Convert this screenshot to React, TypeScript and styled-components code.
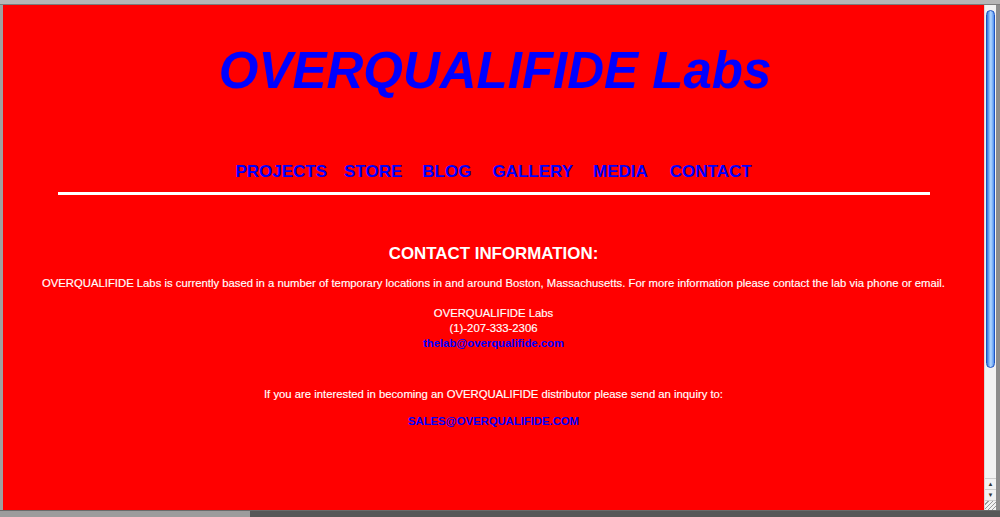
import React from 'react';
import styled, { createGlobalStyle } from 'styled-components';

const GlobalStyle = createGlobalStyle`
  html, body {
    margin: 0;
    padding: 0;
    overflow: hidden;
    background: #a4a4a4;
  }
`;

const Screen = styled.div`
  display: flex;
  flex-direction: column;
  width: 1000px;
  height: 517px;
  font-family: 'Liberation Sans', Arial, Helvetica, sans-serif;
`;

const TopStrip = styled.div`
  height: 4px;
  background: #b6b6b6;
  border-bottom: 1px solid #7c7c7c;
`;

const Middle = styled.div`
  display: flex;
  flex: 1;
  min-height: 0;
`;

const Edge = styled.div<{ $w: number; $bg: string }>`
  width: ${(p) => p.$w}px;
  background: ${(p) => p.$bg};
`;

const Page = styled.main`
  flex: 1;
  background: #ff0000;
  text-align: center;
  color: #ffffff;
  overflow: hidden;
`;

const Title = styled.h1`
  margin: 40px 0 0;
  padding-left: 3px;
  font-size: 51px;
  line-height: 51px;
  font-weight: bold;
  font-style: italic;
  color: #0000ff;
`;

const Nav = styled.nav`
  display: flex;
  justify-content: center;
  margin-top: 67px;
`;

const NavLink = styled.a<{ $gap: number }>`
  margin-left: ${(p) => p.$gap}px;
  font-size: 17px;
  line-height: 17px;
  font-weight: bold;
  color: #0000ff;
  text-decoration: none;
`;

const Rule = styled.div`
  width: 872px;
  height: 3px;
  margin: 12px auto 0;
  background: #ffffff;
`;

const Heading = styled.h2`
  margin: 50px 0 0;
  font-size: 16.9px;
  line-height: 17px;
  font-weight: bold;
`;

const Text = styled.p<{ $top: number }>`
  margin: ${(p) => p.$top}px 0 0;
  font-size: 11.3px;
  line-height: 15px;
  -webkit-text-stroke: 0.15px #ffffff;
`;

const MailLink = styled.a`
  font-weight: bold;
  color: #0000ff;
  text-decoration: none;
  -webkit-text-stroke: 0;
`;

const Scrollbar = styled.div`
  display: flex;
  flex-direction: column;
  width: 12px;
  background: #f2f2f2;
  border-left: 1px solid #d8d8d8;
  box-sizing: border-box;
`;

const Thumb = styled.div`
  height: 358px;
  margin: 5px 1px 0 1px;
  border-radius: 5px;
  border: 1px solid #1f54c0;
  background: linear-gradient(90deg, #2f6fdc 0%, #86bdf8 35%, #b4d8ff 55%, #4d8ff0 100%);
  box-sizing: border-box;
`;

const Track = styled.div`
  flex: 1;
`;

const ArrowButton = styled.div`
  display: flex;
  align-items: center;
  justify-content: center;
  height: 10px;
  font-size: 6px;
  color: #333333;
  border-top: 1px solid #cfcfcf;
`;

const Grip = styled.div`
  height: 9px;
  border-top: 1px solid #cfcfcf;
  background: repeating-linear-gradient(135deg, #f2f2f2 0 2px, #9a9a9a 2px 3px);
`;

const BottomStrip = styled.div`
  display: flex;
  height: 6px;
  border-top: 1px solid #6a6a6a;
`;

const BottomPart = styled.div<{ $w?: number; $bg: string }>`
  ${(p) => (p.$w ? `width: ${p.$w}px;` : 'flex: 1;')}
  background: ${(p) => p.$bg};
`;

const links = [
  { label: 'PROJECTS', gap: 0 },
  { label: 'STORE', gap: 17 },
  { label: 'BLOG', gap: 20 },
  { label: 'GALLERY', gap: 21 },
  { label: 'MEDIA', gap: 20 },
  { label: 'CONTACT', gap: 22 },
];

export default function App() {
  return (
    <>
      <GlobalStyle />
      <Screen>
        <TopStrip />
        <Middle>
          <Edge $w={3} $bg='#a0a0a0' />
          <Page>
            <Title>OVERQUALIFIDE Labs</Title>
            <Nav>
              {links.map((l) => (
                <NavLink key={l.label} href='#' $gap={l.gap}>
                  {l.label}
                </NavLink>
              ))}
            </Nav>
            <Rule />
            <Heading>CONTACT INFORMATION:</Heading>
            <Text $top={14}>
              OVERQUALIFIDE Labs is currently based in a number of temporary
              locations in and around Boston, Massachusetts. For more
              information please contact the lab via phone or email.
            </Text>
            <Text $top={15}>
              OVERQUALIFIDE Labs
              <br />
              (1)-207-333-2306
              <br />
              <MailLink href='#'>thelab@overqualifide.com</MailLink>
            </Text>
            <Text $top={36}>
              If you are interested in becoming an OVERQUALIFIDE distributor
              please send an inquiry to:
            </Text>
            <Text $top={12}>
              <MailLink href='#'>SALES@OVERQUALIFIDE.COM</MailLink>
            </Text>
          </Page>
          <Scrollbar>
            <Thumb />
            <Track />
            <ArrowButton>▲</ArrowButton>
            <ArrowButton>▼</ArrowButton>
            <Grip />
          </Scrollbar>
          <Edge $w={4} $bg='#8c8c8c' />
        </Middle>
        <BottomStrip>
          <BottomPart $w={250} $bg='#9c9c9c' />
          <BottomPart $bg='#575757' />
        </BottomStrip>
      </Screen>
    </>
  );
}
